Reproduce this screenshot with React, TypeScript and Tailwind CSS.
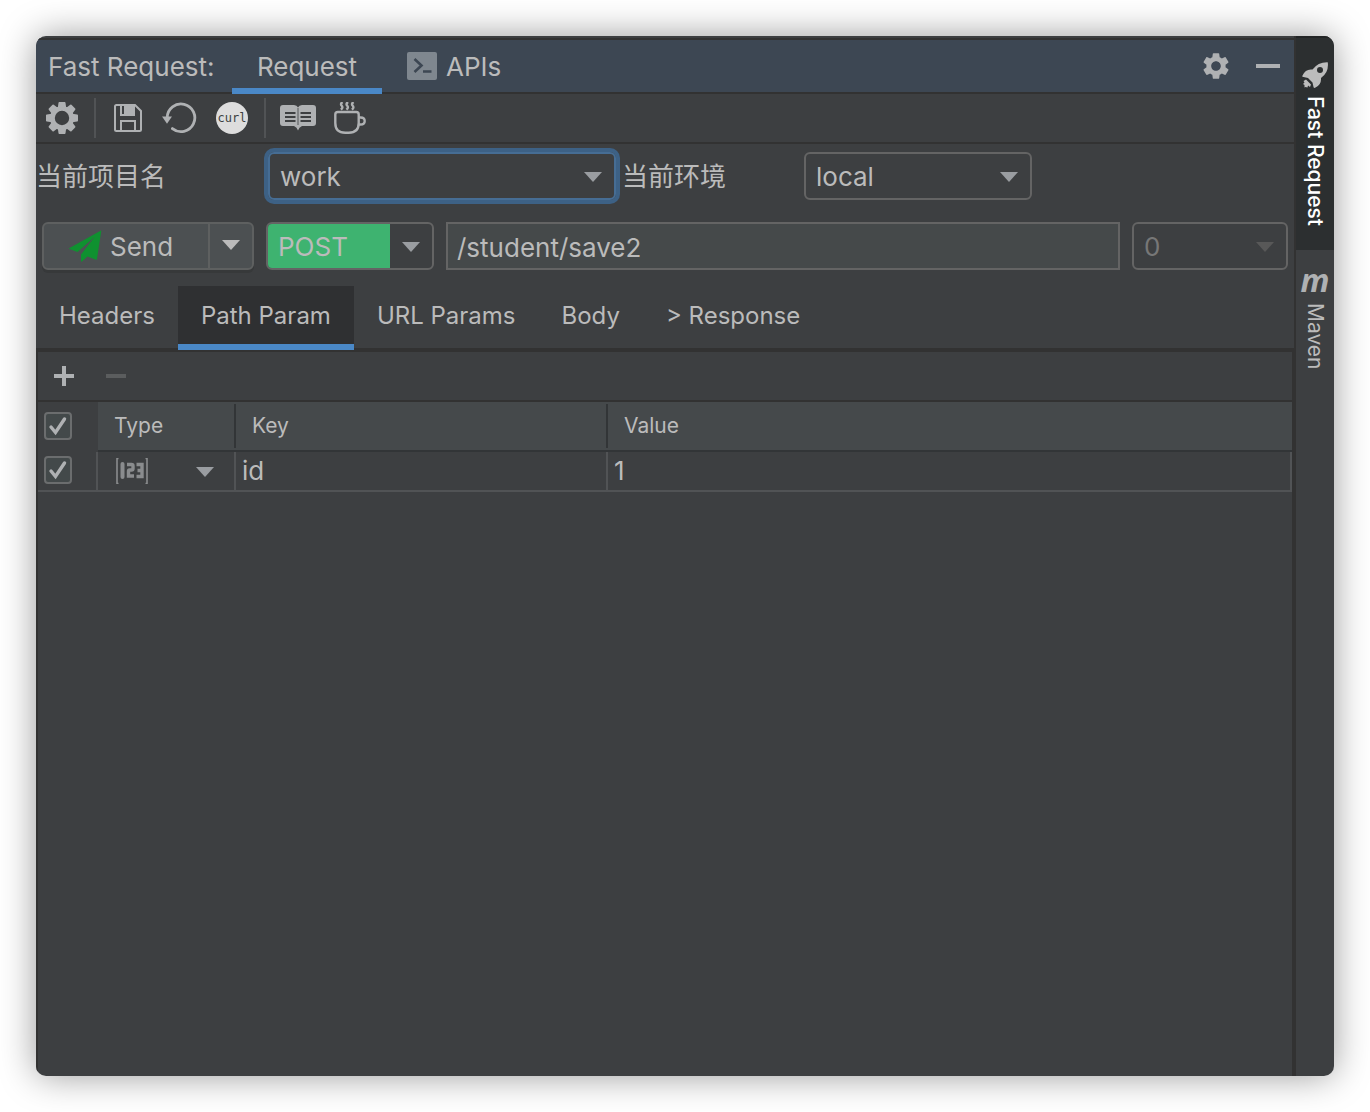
import type { ReactNode } from "react";
import { MdSettings } from "react-icons/md";

function GearIcon() {
  return (
    <svg viewBox="0 0 32 32" className="size-8" fill="none" stroke="#afb1b3" aria-hidden>
      <circle cx="16" cy="16" r="9.6" strokeWidth="4.8" />
      {[0, 45, 90, 135, 180, 225, 270, 315].map((a) => (
        <path key={a} d="M13.4 0h5.2q.8 0 .9.8l.7 5h-8.400l.7-5q.1-.8.9-.8z" fill="#afb1b3" stroke="none" transform={`rotate(${a} 16 16)`} />
      ))}
    </svg>
  );
}

function SaveIcon() {
  return (
    <svg viewBox="0 0 28 28" className="size-7" fill="none" stroke="#afb1b3" strokeWidth="2" aria-hidden>
      <path d="M1 2.5Q1 1 2.5 1H21l6 6v18.5q0 1.5-1.5 1.5h-23Q1 27 1 25.5z" />
      <path d="M7 27V17h14v10" />
      <path d="M7 1v10h13V1" />
      <path d="M10 1h10v9H10z" fill="#afb1b3" stroke="none" />
    </svg>
  );
}

function ResetIcon() {
  return (
    <svg viewBox="0 0 36 32" className="h-8 w-9" fill="none" stroke="#afb1b3" strokeWidth="2.8" aria-hidden>
      <path d="M5.2 15.6A13.8 13.8 0 1 1 10.400 26.600" strokeLinecap="round" />
      <path d="M0 14.600h10l-5 7.200z" fill="#afb1b3" stroke="none" />
    </svg>
  );
}

function BookIcon() {
  return (
    <svg viewBox="0 0 36 26" className="h-[26px] w-9" aria-hidden>
      <path
        d="M3 0h11q3 0 4 2.5Q19 0 22 0h11q3 0 3 3v15q0 3-3 3H22q-3 1-4 4.5Q17 22 14 21H3q-3 0-3-3V3q0-3 3-3z"
        fill="#afb1b3"
      />
      <path d="M5 8h10.500M5 12h10.500M5 16h10.500M20.500 8H31M20.500 12H31M20.500 16H31" stroke="#3d3f41" strokeWidth="1.8" />
      <path d="M18 3v17" stroke="#3d3f41" strokeWidth="0.8" />
    </svg>
  );
}

function CupIcon() {
  return (
    <svg viewBox="0 0 32 32" className="size-8" fill="none" stroke="#afb1b3" strokeWidth="2.4" aria-hidden>
      <path d="M1.3 12.500q0-2.500 2.500-2.500h18.400q2.500 0 2.500 2.500v8.500q0 9.700-10 9.700h-3.400q-10 0-10-9.700z" />
      <path d="M24.700 15.500h2q4 0 4 3.500t-4 3.500h-2" />
      <path d="M8.500 0q-2.500 2-.8 3.800t-.8 3.800M14 0q-2.500 2-.8 3.800t-.8 3.800M19.500 0q-2.500 2-.8 3.800t-.8 3.800" />
    </svg>
  );
}

function TerminalIcon() {
  return (
    <svg viewBox="0 0 30 28" className="h-7 w-[30px]" aria-hidden>
      <rect width="30" height="28" rx="2" fill="#7f878f" />
      <path d="M7.500 7l7 6.500-7 6.500M16 19.500h8.500" fill="none" stroke="#3d4753" strokeWidth="2.6" />
    </svg>
  );
}

function SendIcon() {
  return (
    <svg viewBox="0 0 34 32" className="h-8 w-[34px]" fill="#0f9130" aria-hidden>
      <path d="M33 .5q.3-.5.300.3L29 29q0 1-1 .7L19.500 26.500 14 31.500q-1 .6-1-.5v-6.500L26.500 7 9.500 22 1.500 19q-1-.5 0-1z" />
    </svg>
  );
}

function RocketIcon() {
  return (
    <svg viewBox="0 0 26 26" className="size-[26px]" fill="#bcbcbc" aria-hidden>
      <path
        fillRule="evenodd"
        d="M25.500.2Q16 0 10.500 7.500 3.500 6.500.5 13.500q-.5 1.500 1 1.500l4.500 1 4.500 4.500 1 4.500q.5 1.500 2 .5 6-2.500 5.500-9.500Q27 10.500 25.800.5zM18 5a3 3 0 1 1 0 6 3 3 0 0 1 0-6z"
      />
      <path d="M4 17.500l5 5-1 2.500-2-1.500-.5 2-2-.5-1 .5V23L1 22l1.500-1.500L1.500 19z" />
    </svg>
  );
}

function NumberIcon() {
  return (
    <svg viewBox="0 0 32 26" className="h-[26px] w-8" fill="none" stroke="#8a8c8e" aria-hidden>
      <path d="M2.5 .5H1v25h1.500M29.500 .5H31v25h-1.500" strokeWidth="1.600" />
      <path d="M6.500 6v13" strokeWidth="4" strokeLinecap="round" />
      <path d="M11 6.500h4.500q1.500 0 1.500 1.500v2.500q0 1.500-1.500 1.500h-2q-1 0-1 1.500v4.500h5.500" strokeWidth="3.4" />
      <path d="M20.500 6.500h5.500v12h-5.500M21.500 12.500h4.500" strokeWidth="3.4" />
    </svg>
  );
}

function Arrow({ className = "" }: { className?: string }) {
  return (
    <svg viewBox="0 0 18 10" className={`pointer-events-none h-[10px] w-[18px] fill-current ${className}`} aria-hidden>
      <path d="M0 0h18L9 10z" />
    </svg>
  );
}

function ToolButton({ label, children }: { label: string; children: ReactNode }) {
  return (
    <button type="button" aria-label={label} className="flex h-10 w-[52px] items-center justify-center">
      {children}
    </button>
  );
}

type ComboProps = {
  id: string;
  label: string;
  value: string;
  wrap: string;
  select?: string;
  arrow?: string;
  disabled?: boolean;
};

function Combo({ id, label, value, wrap, select = "", arrow = "text-[#9a9da1]", disabled }: ComboProps) {
  return (
    <div className={`relative h-12 rounded-md border-2 ${wrap}`}>
      <select
        id={id}
        aria-label={label}
        disabled={disabled}
        className={`h-full appearance-none rounded-l-sm pt-[2px] pl-[10px] outline-none ${select || "w-full"}`}
      >
        <option>{value}</option>
      </select>
      <Arrow className={`absolute top-[18px] right-3 ${arrow}`} />
    </div>
  );
}

function Check({ label }: { label: string }) {
  return (
    <span className="relative block size-7">
      <input
        type="checkbox"
        defaultChecked
        aria-label={label}
        className="peer block size-7 appearance-none rounded border-2 border-[#6b6d6e] bg-[#43494a]"
      />
      <svg
        viewBox="0 0 28 28"
        className="pointer-events-none absolute inset-0 hidden size-7 peer-checked:block"
        fill="none"
        stroke="#afb1b3"
        strokeWidth="3.4"
        strokeLinecap="round"
        aria-hidden
      >
        <path d="M7 15l4.500 5.500L20.500 7" />
      </svg>
    </span>
  );
}

const TABS = ["Headers", "Path Param", "URL Params", "Body", "> Response"];

function Header() {
  return (
    <header className="flex h-14 items-stretch border-y-2 border-[#323232] bg-[#3d4753] pl-3">
      <h1 className="flex w-[184px] items-center pt-[2px]">Fast Request:</h1>
      <button type="button" className="z-10 -mb-[2px] w-[150px] border-b-6 border-[#4a88c7] pt-[6px]">
        Request
      </button>
      <button type="button" className="flex items-center gap-[9px] pl-[25px]">
        <TerminalIcon />
        <span className="pt-[2px]">APIs</span>
      </button>
      <div className="ml-auto flex items-center gap-6 pr-[14px]">
        <button type="button" aria-label="Settings">
          <MdSettings className="size-8 text-[#afb1b3]" />
        </button>
        <button type="button" aria-label="Hide" className="h-1 w-6 bg-[#afb1b3]" />
      </div>
    </header>
  );
}

function Toolbar() {
  return (
    <div className="flex h-[50px] items-center border-b-2 border-[#323232]">
      <ToolButton label="Config">
        <GearIcon />
      </ToolButton>
      <span className="mr-[6px] ml-[6px] h-10 w-[2px] bg-[#515355]" />
      <ToolButton label="Save">
        <SaveIcon />
      </ToolButton>
      <ToolButton label="Reset">
        <ResetIcon />
      </ToolButton>
      <ToolButton label="Copy as curl">
        <span className="flex size-8 items-center justify-center rounded-full bg-[#dddddd] font-['DejaVu_Sans_Mono',monospace] text-xs text-[#3c3f41]">
          curl
        </span>
      </ToolButton>
      <span className="mr-[6px] ml-[6px] h-10 w-[2px] bg-[#515355]" />
      <ToolButton label="Docs">
        <BookIcon />
      </ToolButton>
      <ToolButton label="Coffee">
        <CupIcon />
      </ToolButton>
    </div>
  );
}

function ParamTable() {
  return (
    <table className="w-full table-fixed border-separate border-spacing-0 text-left">
      <colgroup>
        <col className="w-[60px]" />
        <col className="w-[138px]" />
        <col className="w-[372px]" />
        <col />
      </colgroup>
      <thead className="text-[21px]">
        <tr className="h-[50px]">
          <th className="border-b-2 border-[#3d3f41] p-0 pl-[6px]">
            <Check label="Select all" />
          </th>
          {["Type", "Key", "Value"].map((name) => (
            <th key={name} className="group border-b-2 border-[#323537] bg-[#45494b] p-0 font-normal">
              <div className="flex h-11 items-center border-r-2 border-[#323537] pl-4 group-last:border-r-0">{name}</div>
            </th>
          ))}
        </tr>
      </thead>
      <tbody>
        <tr className="h-10">
          <td className="border-r-2 border-b-2 border-[#515355] p-0 pb-[2px] pl-[6px]">
            <Check label="Use id" />
          </td>
          <td className="border-r-2 border-b-2 border-[#515355] p-0 pl-[18px]">
            <button type="button" aria-label="Number" className="flex w-[98px] items-center justify-between">
              <NumberIcon />
              <Arrow className="mt-[2px] text-[#9a9da1]" />
            </button>
          </td>
          <td className="border-r-2 border-b-2 border-[#515355] p-0 pl-[6px]">id</td>
          <td className="border-r-2 border-b-2 border-[#515355] p-0 pl-[6px]">1</td>
        </tr>
      </tbody>
    </table>
  );
}

function SideBar() {
  return (
    <aside className="flex w-10 flex-none flex-col border-l-2 border-[#323232] text-[21px]">
      <button
        type="button"
        className="flex h-[214px] flex-col items-center gap-2 border-t-2 border-[#232526] bg-[#2c2f30] pt-6 font-medium text-white"
      >
        <RocketIcon />
        <span className="[writing-mode:vertical-rl]">Fast Request</span>
      </button>
      <button type="button" className="flex flex-col items-center gap-2 pt-[15px]">
        <span className="font-['Open_Sans',sans-serif] text-[32px] leading-[30px] font-bold text-[#afb1b3] italic" aria-hidden>
          m
        </span>
        <span className="[writing-mode:vertical-rl]">Maven</span>
      </button>
    </aside>
  );
}

export default function App() {
  return (
    <div className="min-h-screen bg-white p-9 font-['Inter','Noto_Sans_CJK_SC',sans-serif] text-[26px] leading-8 text-[#bbbbbb]">
      <div className="flex min-h-[1040px] overflow-hidden rounded-[10px] bg-[#3d3f41] shadow-[0_0_36px_rgba(0,0,0,0.4)]">
        <main className="flex min-w-0 flex-1 flex-col pt-[2px]">
          <Header />
          <Toolbar />

          <div className="flex items-center pt-2">
            <label htmlFor="project" className="w-[232px] pt-[2px]">
              当前项目名
            </label>
            <Combo
              id="project"
              label="当前项目名"
              value="work"
              wrap="w-[348px] border-[#466d94] ring-4 ring-[#3d6185]"
            />
            <label htmlFor="env" className="ml-[6px] w-[182px] pt-[2px]">
              当前环境
            </label>
            <Combo id="env" label="当前环境" value="local" wrap="w-[228px] border-[#646464]" />
          </div>

          <div className="mt-[22px] flex items-center gap-3 pr-[6px] pl-[6px]">
            <div className="flex h-12 w-[212px] rounded-md border-2 border-[#5e6060] bg-[#4c5052] shadow-[0_3px_0_#37393a]">
              <button type="button" className="flex flex-1 items-center gap-2 pl-6">
                <SendIcon />
                <span className="pt-[2px]">Send</span>
              </button>
              <button
                type="button"
                aria-label="More send options"
                className="flex w-11 items-center justify-center border-l-2 border-[#5e6060] pb-[2px]"
              >
                <Arrow />
              </button>
            </div>
            <Combo
              id="method"
              label="Method"
              value="POST"
              wrap="w-[168px] border-[#646464]"
              select="w-[122px] bg-[#3eb370]"
            />
            <input
              aria-label="URL"
              defaultValue="/student/save2"
              className="h-12 min-w-0 flex-1 border-2 border-[#646464] bg-[#45494a] px-[9px] pt-[2px] outline-none"
            />
            <Combo
              id="count"
              label="Count"
              value="0"
              wrap="w-[156px] border-[#646464]"
              select="w-full text-[#777777] opacity-100"
              arrow="text-[#585858]"
              disabled
            />
          </div>

          <nav className="mt-4 flex h-16 text-2xl">
            {TABS.map((tab) => (
              <button
                key={tab}
                type="button"
                className={
                  tab === "Path Param"
                    ? "z-10 border-b-6 border-[#4a88c7] bg-[#2f3032] px-[23px] pt-[2px]"
                    : "border-b-2 border-[#323232] px-[23px] pb-[2px]"
                }
              >
                {tab}
              </button>
            ))}
            <span className="flex-1 border-b-2 border-[#323232]" />
          </nav>

          <section className="flex-1 border-x-2 border-t-2 border-[#323232]">
            <div className="flex h-[50px] items-center gap-8 border-b-2 border-[#323232] pl-4">
              <button type="button" aria-label="Add">
                <svg viewBox="0 0 20 20" className="size-5" stroke="#afb1b3" strokeWidth="4" aria-hidden>
                  <path d="M10 0v20M0 10h20" />
                </svg>
              </button>
              <button type="button" aria-label="Remove" className="h-1 w-5 bg-[#5b5d5e]" />
            </div>
            <ParamTable />
          </section>
        </main>
        <SideBar />
      </div>
    </div>
  );
}
